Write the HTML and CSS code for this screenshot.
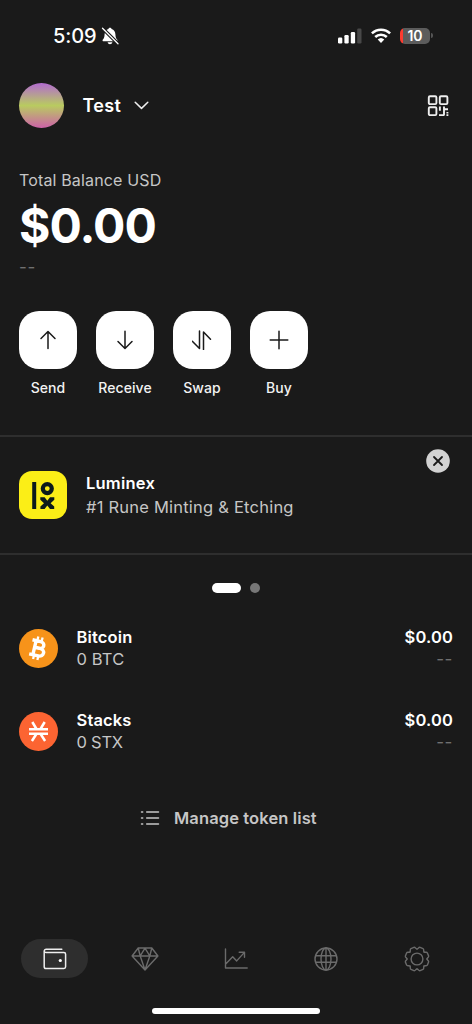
FILE: index.html
```html
<!DOCTYPE html>
<html lang="en">
<head>
<meta charset="utf-8">
<title>Wallet</title>
<link rel="stylesheet" href="styles.css">
</head>
<body>
<main class="app">
  <div class="status">
    <div class="clock"><span class="time">5:09</span>
      <svg width="18" height="18" viewBox="0 0 18 18"><path fill="#fff" d="M9 .8c.8 0 1.400.5 1.600 1.200 2.400.7 3.700 2.700 3.800 5.200.1 3 .7 4.200 1.700 5.200.7.8.4 1.800-.8 1.800H2.700c-1.200 0-1.500-1-.8-1.800 1-1 1.600-2.200 1.700-5.200.1-2.500 1.400-4.500 3.800-5.200C7.600 1.300 8.200.8 9 .8zM6.600 15.200h4.800c-.3 1.300-1.200 2-2.400 2s-2.100-.7-2.400-2z"/><path d="M1.500 1.200 17 16.700" stroke="#1a1a1a" stroke-width="3.400"/><path d="M1.500 1.200 17 16.700" stroke="#fff" stroke-width="1.300" stroke-linecap="round"/></svg>
    </div>
    <div class="signals">
      <svg width="24" height="16" viewBox="0 0 24 16"><g fill="#fff"><rect x="0" y="9.500" width="4.300" height="6" rx="1.200"/><rect x="6.400" y="7" width="4.300" height="8.500" rx="1.200"/><rect x="12.800" y="4" width="4.300" height="11.500" rx="1.200"/></g><rect x="19.200" y=".5" width="4.300" height="15" rx="1.200" fill="#484848"/></svg>
      <svg class="wifi" width="20" height="15" viewBox="0 0 20 15"><path fill="none" stroke="#fff" stroke-width="2.500" d="M.9 5.400a13 13 0 0 1 18.200 0M4.200 9a8.300 8.300 0 0 1 11.600 0"/><path fill="#fff" d="M6.700 11.600a4.800 4.800 0 0 1 6.600 0L10 14.900z"/></svg>
      <div class="battery"><span>10</span></div><i class="battery-tip"></i>
    </div>
  </div>

  <header class="account">
    <div class="avatar"></div>
    <span class="name">Test</span>
    <svg width="15" height="9" viewBox="0 0 15 9"><path d="M1.200 1.200 7.500 7.400 13.800 1.200" class="line light"/></svg>
    <svg class="qr" width="22" height="22" viewBox="0 0 22 22"><g fill="none" stroke="#eee" stroke-width="1.900"><rect x="1.800" y="1.300" width="7.600" height="7.800" rx="1.200"/><rect x="12.800" y="1.300" width="7.600" height="7.800" rx="1.200"/><rect x="1.800" y="12.300" width="7.600" height="7.800" rx="1.200"/><path d="M12.900 11.500v4.300M17 11.500v8.600M17 14.200h4M12 20.100h5.500M20.400 17v1.500M20.400 19.200v1.800"/></g></svg>
  </header>

  <section class="balance">
    <p class="balance-label">Total Balance USD</p>
    <p class="balance-total">$0.00</p>
    <p class="balance-change">--</p>
  </section>

  <section class="actions">
    <div class="action"><div class="tile"><svg width="20" height="20" viewBox="0 0 20 20"><path d="M10 18.500V1.800M3 8.500l7-7 7 7" class="line dark"/></svg></div><span>Send</span></div>
    <div class="action"><div class="tile"><svg width="20" height="20" viewBox="0 0 20 20"><path d="M10 1.200v17M3 11.500l7 7 7-7" class="line dark"/></svg></div><span>Receive</span></div>
    <div class="action"><div class="tile"><svg width="20" height="20" viewBox="0 0 20 20"><path d="M7.500 1v17.500L.3 11.200M11.500 19.500V2l7 7.300" class="line dark"/></svg></div><span>Swap</span></div>
    <div class="action"><div class="tile"><svg width="20" height="20" viewBox="0 0 20 20"><path d="M10 1.200v17.600M1.200 10h17.600" class="line dark"/></svg></div><span>Buy</span></div>
  </section>

  <section class="promo">
    <svg class="promo-logo" width="48" height="48" viewBox="0 0 48 48"><rect width="48" height="48" rx="13" fill="#fbee17"/><g fill="none" stroke="#0c1a1c"><path stroke-width="4" d="M15.200 11v27"/><circle cx="28.300" cy="17.600" r="4.500" stroke-width="4.200"/></g><path fill="#0c1a1c" d="M21.300 26.200h4.300l2.700 3.500 2.700-3.500h4.300v2.600l-3.700 3.400 3.600 3.300V38H31l-2.700-3.400-2.700 3.400h-4.200v-2.500l3.600-3.300-3.700-3.400z"/></svg>
    <div class="promo-copy"><strong>Luminex</strong><p>#1 Rune Minting &amp; Etching</p></div>
    <svg class="close" width="24" height="24" viewBox="0 0 24 24"><circle cx="12" cy="12" r="11.800" fill="#d2d2d2"/><path d="m8 8 8 8m0-8-8 8" stroke="#1a1a1a" stroke-width="1.800" stroke-linecap="round"/></svg>
  </section>
  <div class="pager"><i class="on"></i><i></i></div>

  <section class="tokens">
    <div class="token">
      <svg width="39" height="39" viewBox="0 0 39 39"><circle cx="19.500" cy="19.500" r="19.500" fill="#f7931a"/><g transform="rotate(13 19.500 19.500)"><path fill="none" stroke="#fff" stroke-width="3.400" d="M11.700 12.300h8.400c5.200 0 5.200 6.800 0 6.800h-4.300h5c6.200 0 6.200 7.700 0 7.700h-9.200M15.400 12v15"/><path stroke="#fff" stroke-width="2.300" d="M16.600 7.800v4M21 7.800v4M16.600 27v4M21 27v4"/></g></svg>
      <div class="token-name"><strong>Bitcoin</strong><span>0 BTC</span></div>
      <div class="token-value"><strong>$0.00</strong><span>--</span></div>
    </div>
    <div class="token">
      <svg width="39" height="39" viewBox="0 0 39 39"><circle cx="19.500" cy="19.500" r="19.500" fill="#fc6432"/><path fill="none" stroke="#fff" stroke-width="2.500" d="M10 17.200h19M10 21.800h19M13.300 10l4.200 7M25.700 10l-4.200 7M12.900 29l4.500-7M26.100 29l-4.500-7"/></svg>
      <div class="token-name"><strong>Stacks</strong><span class="tight">0 STX</span></div>
      <div class="token-value"><strong>$0.00</strong><span>--</span></div>
    </div>
  </section>

  <div class="manage">
    <svg width="20" height="16" viewBox="0 0 20 16"><path d="M6.700 2h11.800M6.700 8h11.800M6.700 14h11.800M1.500 2h1.200M1.500 8h1.200M1.500 14h1.200" stroke="#c6c6c6" stroke-width="1.500" stroke-linecap="round"/></svg>
    <span>Manage token list</span>
  </div>

  <nav class="tabs">
    <div class="tab active"><svg width="24" height="22" viewBox="0 0 24 22"><path class="line light" d="M18.800 1.200H3.200a2 2 0 0 0-2 2v15.500c0 1.200.6 1.800 1.700 1.800h18c1 0 1.700-.6 1.700-1.700V6.300c0-1-.6-1.700-1.700-1.700H3a1.700 1.700 0 0 1-1.700-1.500"/><circle cx="17.300" cy="12.500" r="1.600" fill="#fff"/></svg></div>
    <div class="tab"><svg width="28" height="24" viewBox="0 0 28 24"><path class="line muted" d="M7.200 1h13.600l6.100 8L14 23 1.100 9zM1.100 9h25.800M7.200 1l2 8L14 23l4.800-14 2-8M9.200 9 14 1.200 18.800 9"/></svg></div>
    <div class="tab"><svg width="24" height="22" viewBox="0 0 24 22"><path class="line muted" d="M1.500 1v19h21.700M1.500 16.200 8.700 8.700l4 4.200 7.700-8.500M15.200 4.200h5.300v5"/></svg></div>
    <div class="tab"><svg width="24" height="24" viewBox="0 0 24 24"><g class="line muted"><circle cx="12" cy="12" r="11"/><ellipse cx="12" cy="12" rx="5" ry="11"/><path d="M12 1v22M2 8.700h20M2 15.300h20"/></g></svg></div>
    <div class="tab"><svg width="26" height="26" viewBox="-13 -13 26 26"><g class="line muted"><path id="tooth" d="M0-10C1.400-10 1.600-12.200 3.100-11.600L6-10.400C7.500-9.760 6.080-8.070 7.070-7.070"/><use href="#tooth" transform="rotate(45)"/><use href="#tooth" transform="rotate(90)"/><use href="#tooth" transform="rotate(135)"/><use href="#tooth" transform="rotate(180)"/><use href="#tooth" transform="rotate(225)"/><use href="#tooth" transform="rotate(270)"/><use href="#tooth" transform="rotate(315)"/><circle r="5.900"/></g></svg></div>
  </nav>
  <div class="home"></div>
</main>
</body>
</html>
```

FILE: styles.css
```css
* { box-sizing: border-box; }
body { margin: 0; background: #1a1a1a; color: #fff; font-family: Inter, "Liberation Sans", sans-serif; }
p { margin: 0; }
svg { display: block; flex: none; }
strong { font-weight: 600; }
.app { width: 472px; height: 1024px; display: flex; flex-direction: column; overflow: hidden; }
.line { fill: none; stroke-width: 1.500; stroke-linecap: round; stroke-linejoin: round; }
.light { stroke: #eee; }
.dark { stroke: #1a1a1a; }
.muted { stroke: #6b6b6b; stroke-width: 1.400; }

.status { height: 71px; padding: 0 39px 0 53px; display: flex; justify-content: space-between; align-items: center; }
.clock { display: flex; align-items: center; gap: 4px; }
.time { font-size: 20px; font-weight: 500; letter-spacing: -.1px; }
.signals { display: flex; align-items: center; }
.wifi { margin-left: 9px; }
.battery { margin-left: 9px; width: 30px; height: 16px; border-radius: 5px; background: linear-gradient(90deg, #fc3b30 3px, #5c5c5c 3px); display: flex; align-items: center; justify-content: center; font-size: 14px; font-weight: 600; }
.battery-tip { width: 2px; height: 5px; margin-left: 1px; border-radius: 0 2px 2px 0; background: #555; }

.account { height: 69px; padding: 0 23px 0 19px; display: flex; align-items: center; }
.avatar { width: 45px; height: 45px; border-radius: 50%; background: linear-gradient(#b26bd0, #b9cb60 50%, #cc62a8); }
.name { margin: 0 13px 0 18.500px; font-size: 18px; font-weight: 600; letter-spacing: .3px; }
.qr { margin-left: auto; }

.balance { height: 171px; padding: 29px 19px 0; display: flex; flex-direction: column; }
.balance-label { height: 22px; line-height: 22px; font-size: 16px; letter-spacing: .15px; color: #c6c6c6; }
.balance-total { height: 68px; line-height: 70px; font-size: 48px; font-weight: 700; letter-spacing: -1px; }
.balance-change { height: 17px; line-height: 17px; font-size: 17px; letter-spacing: .6px; color: #707070; }

.actions { height: 124px; padding-left: 19px; display: flex; gap: 19px; }
.action { width: 58px; display: flex; flex-direction: column; align-items: center; gap: 9px; font-size: 14px; font-weight: 500; line-height: 20px; letter-spacing: .1px; color: #f2f2f2; white-space: nowrap; }
.tile { width: 58px; height: 58px; border-radius: 20px; background: #fff; display: flex; align-items: center; justify-content: center; }

.promo { height: 120px; border-top: 2px solid #2e2e2e; border-bottom: 2px solid #2e2e2e; padding: 0 22px 0 19px; display: flex; align-items: center; }
.promo-copy { margin-left: 19px; font-size: 16.500px; line-height: 24px; letter-spacing: .22px; }
.promo-copy strong { display: block; }
.promo-copy p { color: #c6c6c6; }
.close { margin: 12px 0 0 auto; align-self: flex-start; }
.pager { height: 67px; padding: 28px 0 0 212px; display: flex; gap: 9px; }
.pager i { width: 10px; height: 10px; border-radius: 5px; background: #777; }
.pager .on { width: 29px; background: #fff; }

.tokens { padding: 0 19px; display: flex; flex-direction: column; gap: 38px; margin-top: 4px; }
.token { height: 45px; display: flex; align-items: center; font-size: 16.500px; line-height: 22px; letter-spacing: .15px; }
.token strong, .token span { display: block; }
.token-name, .token-value { margin-top: -1px; }
.token-name { margin-left: 18.500px; }
.token-name span { color: #c6c6c6; }
.token-name .tight { letter-spacing: -.25px; }
.token-value { margin-left: auto; text-align: right; }
.token-value span { font-size: 17px; letter-spacing: .6px; color: #707070; }

.manage { height: 24px; margin: 52px 0 0 140px; display: flex; align-items: center; gap: 14px; font-size: 16.500px; font-weight: 600; letter-spacing: .12px; color: #c6c6c6; }

.tabs { height: 39px; margin-top: 109px; padding: 0 21px; display: flex; gap: 23.500px; }
.tab { width: 67px; height: 39px; border-radius: 20px; display: flex; align-items: center; justify-content: center; flex: none; }
.active { background: #2e2e2e; }
.home { width: 168px; height: 6px; margin: 30px auto 0; border-radius: 3px; background: #fff; }
```
